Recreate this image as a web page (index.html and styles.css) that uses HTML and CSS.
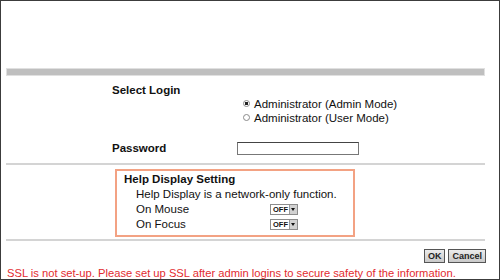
FILE: index.html
```html
<!DOCTYPE html>
<html lang="en">
<head>
  <meta charset="UTF-8" />
  <title>Login</title>
  <link rel="stylesheet" href="styles.css">
</head>
<body>
  <div class="frame">
    <div class="top"></div>
    <div class="bar"></div>
    <div class="login">
      <div class="login-title">Select Login</div>
      <div class="radios">
        <div class="radio"><span class="dot on"></span>Administrator (Admin Mode)</div>
        <div class="radio"><span class="dot"></span>Administrator (User Mode)</div>
      </div>
      <div class="pw-row">
        <span class="pw-label">Password</span>
        <span class="pw-input"></span>
      </div>
    </div>
    <div class="help-sec">
      <div class="help-box">
        <div class="help-title">Help Display Setting</div>
        <div class="help-line">Help Display is a network-only function.</div>
        <div class="help-line">
          <span class="opt-label">On Mouse</span>
          <span class="sel">OFF<span class="sel-btn"></span></span>
        </div>
        <div class="help-line">
          <span class="opt-label">On Focus</span>
          <span class="sel">OFF<span class="sel-btn"></span></span>
        </div>
      </div>
    </div>
    <div class="actions">
      <span class="btn">OK</span>
      <span class="btn">Cancel</span>
    </div>
    <div class="warn">SSL is not set-up. Please set up SSL after admin logins to secure safety of the information.</div>
  </div>
</body>
</html>
```

FILE: styles.css
```css
body { margin: 0; background: #fff; font-family: "Liberation Sans", Arial, sans-serif; font-size: 11.5px; color: #111; }
.frame { width: 500px; height: 280px; box-sizing: border-box; border: 1px solid #3c3c3c; overflow: hidden; }
.top { height: 67px; }
.bar { margin-left: 5px; width: 479px; height: 8px; box-sizing: border-box; background: #bfbfbf; border: 1px solid #e0e0e0; }

.login { margin-top: 8px; padding-left: 111px; }
.login-title { font-weight: bold; line-height: 13px; }
.radios { margin-left: 131px; }
.radio { display: flex; align-items: center; line-height: 14px; }
.dot { width: 5px; height: 5px; border: 1px solid #8a8a8a; border-radius: 50%; margin-right: 4px; background: #fff; position: relative; top: -1px; }
.dot.on { background: radial-gradient(circle, #222 0 1.6px, #fff 2px); }
.pw-row { display: flex; align-items: center; margin-top: 16px; line-height: 14px; }
.pw-label { width: 125px; font-weight: bold; }
.pw-input { width: 122px; height: 13px; box-sizing: border-box; border: 1px solid #777; border-top-color: #444; background: #fff; }

.help-sec { margin: 8px 0 0 5px; width: 479px; border-top: 2px solid #d4d4d4; border-bottom: 2px solid #d4d4d4; padding: 4px 0 2px 0; }
.help-box { margin-left: 109px; width: 240px; height: 68px; box-sizing: border-box; border: 2px solid #f3a283; padding: 1px 0 0 7px; }
.help-title { font-weight: bold; line-height: 15px; }
.help-line { display: flex; align-items: center; line-height: 15px; padding-left: 12px; }
.opt-label { width: 134px; }
.sel { display: flex; align-items: center; justify-content: space-between; width: 28px; height: 11px; box-sizing: border-box; border: 1px solid #8c8c8c; background: #fff; font-size: 7.5px; font-weight: bold; line-height: 9px; padding-left: 2px; }
.sel-btn { width: 8px; height: 9px; box-sizing: border-box; background: #d2d2d2; border-left: 1px solid #999; position: relative; }
.sel-btn::after { content: ""; position: absolute; left: 1px; top: 3px; border-left: 2.5px solid transparent; border-right: 2.5px solid transparent; border-top: 3px solid #111; }

.actions { display: flex; justify-content: flex-end; gap: 3px; width: 480px; margin: 8px 0 0 5px; }
.btn { height: 14px; box-sizing: border-box; border: 1px solid #555; background: linear-gradient(#ececec, #c9c9c9); font-size: 9px; font-weight: bold; line-height: 12px; padding: 0 3px; color: #222; }
.warn { margin-top: 3px; padding-left: 6px; color: #e22b2f; font-size: 11.2px; line-height: 14px; white-space: nowrap; }
```
